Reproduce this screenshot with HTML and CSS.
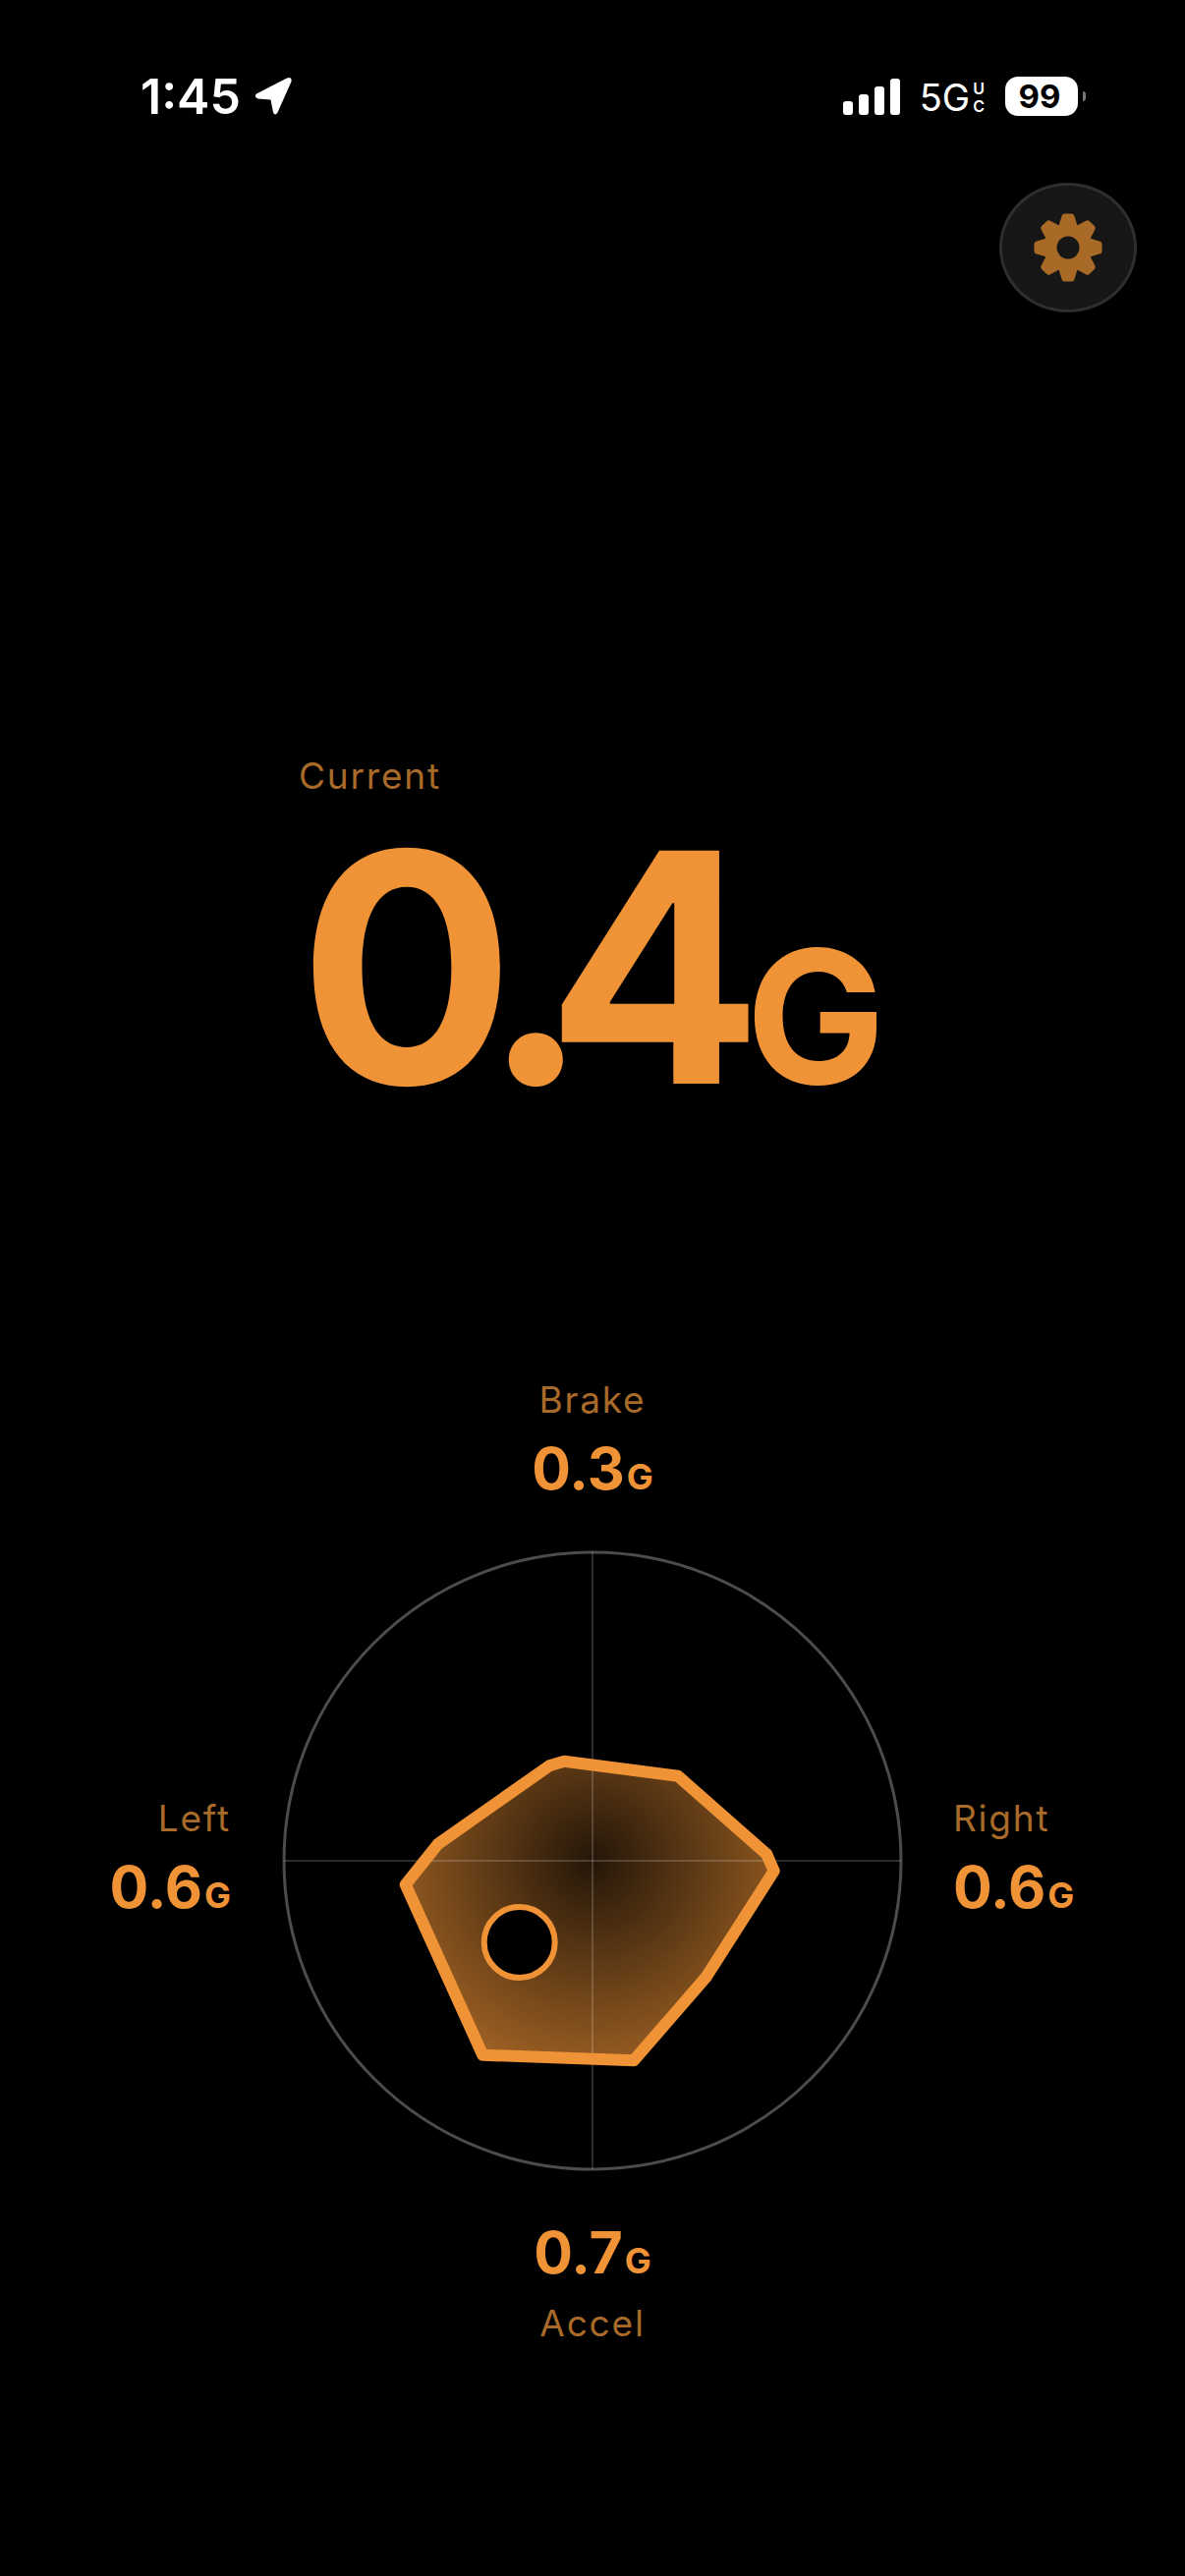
FILE: index.html
```html
<!DOCTYPE html>
<html>
<head>
    <meta charset="UTF-8">
    <title>G Meter</title>
    <link rel="stylesheet" href="styles.css">
</head>
<body>
    <!-- Status bar -->
    <div class="status-bar">
        <div class="status-left">
            <span class="time">1:45</span>
            <svg class="location" viewBox="0 0 40 40">
                <path d="M3 17.5 L34 1.5 Q39.5 -0.5 38.5 5 L24.5 36.5 Q22 40.5 20 36.5 L17.5 23.5 L4.5 22.5 Q0 20.5 3 17.5 Z" fill="#fff"/>
            </svg>
        </div>
        <div class="status-right">
            <div class="signal">
                <span class="bar bar-1"></span>
                <span class="bar bar-2"></span>
                <span class="bar bar-3"></span>
                <span class="bar bar-4"></span>
            </div>
            <div class="network">
                <span class="network-5g">5G</span>
                <span class="network-uc"><span>U</span><span>C</span></span>
            </div>
            <div class="battery">
                <div class="battery-body">99</div>
                <div class="battery-nib"></div>
            </div>
        </div>
    </div>

    <!-- Settings -->
    <div class="toolbar">
        <button class="settings" type="button" aria-label="Settings">
            <svg class="gear" viewBox="-36 -36 72 72">
                <defs>
                    <path id="tooth" d="M-9.5 -22 L-6.5 -32 Q-6 -34.5 -3.5 -34.5 H3.5 Q6 -34.5 6.5 -32 L9.5 -22 Z"/>
                </defs>
                <g fill="#a96a27">
                    <use href="#tooth"/>
                    <use href="#tooth" transform="rotate(45)"/>
                    <use href="#tooth" transform="rotate(90)"/>
                    <use href="#tooth" transform="rotate(135)"/>
                    <use href="#tooth" transform="rotate(180)"/>
                    <use href="#tooth" transform="rotate(225)"/>
                    <use href="#tooth" transform="rotate(270)"/>
                    <use href="#tooth" transform="rotate(315)"/>
                    <circle r="25"/>
                </g>
                <circle r="11.5" fill="#161616"/>
            </svg>
        </button>
    </div>

    <!-- Current reading -->
    <div class="current">
        <div class="label current-label">Current</div>
        <div class="current-value"><span class="current-number"><span class="digit-int">0</span><span class="digit-dot">.</span>4</span><span class="current-unit">G</span></div>
    </div>

    <!-- Peak readings and dial -->
    <div class="radar">
        <div class="reading reading-top">
            <div class="label">Brake</div>
            <div class="value">0.3<span class="unit">G</span></div>
        </div>
        <div class="reading reading-left">
            <div class="label">Left</div>
            <div class="value">0.6<span class="unit">G</span></div>
        </div>
        <svg class="dial" viewBox="-320 -320 640 640">
            <defs>
                <radialGradient id="trace" gradientUnits="userSpaceOnUse" cx="0" cy="0" r="315">
                    <stop offset="0" stop-color="#f09336" stop-opacity="0.15"/>
                    <stop offset="1" stop-color="#f09336" stop-opacity="0.87"/>
                </radialGradient>
            </defs>
            <circle class="dial-ring" r="314"/>
            <polygon points="-190.3,24.3 -157.3,-17 -44,-96.7 -28.7,-101.3 87,-86.3 177.3,-6.7 184.7,10.3 115.7,118.3 42,203.3 -111.7,197.7" fill="url(#trace)"/>
            <line class="dial-axis" x1="-314" y1="0" x2="314" y2="0"/>
            <line class="dial-axis" x1="0" y1="-314" x2="0" y2="314"/>
            <polygon class="dial-trace" points="-190.3,24.3 -157.3,-17 -44,-96.7 -28.7,-101.3 87,-86.3 177.3,-6.7 184.7,10.3 115.7,118.3 42,203.3 -111.7,197.7"/>
            <circle class="dial-puck" cx="-74.3" cy="83" r="36"/>
        </svg>
        <div class="reading reading-right">
            <div class="label">Right</div>
            <div class="value">0.6<span class="unit">G</span></div>
        </div>
        <div class="reading reading-bottom">
            <div class="value">0.7<span class="unit">G</span></div>
            <div class="label">Accel</div>
        </div>
    </div>
</body>
</html>
```

FILE: styles.css
```css
html {
    background-color: #000000;
}
body {
    background-color: #000000;
    color: #f09336;
    display: flex;
    flex-direction: column;
    font-family: "Inter", "Liberation Sans", sans-serif;
    margin: 0;
    min-height: 2622px;
    overflow: hidden;
    width: 1206px;
}

/* Status bar */
.status-bar {
    align-items: flex-start;
    box-sizing: border-box;
    color: #ffffff;
    display: flex;
    height: 120px;
    justify-content: space-between;
    padding: 68px 101px 0 143px;
}
.status-left {
    align-items: center;
    display: flex;
    gap: 13px;
}
.time {
    font-size: 50px;
    font-weight: 600;
    line-height: 60px;
}
.location {
    height: 40px;
    width: 40px;
}
.status-right {
    display: flex;
    padding-top: 11px;
}
.signal {
    align-items: flex-end;
    display: flex;
    gap: 6px;
    height: 38px;
}
.bar {
    background-color: #ffffff;
    border-radius: 3px;
    width: 10px;
}
.bar-1 { height: 14px; }
.bar-2 { height: 21px; }
.bar-3 { height: 29px; }
.bar-4 { height: 37px; }
.network {
    display: flex;
    margin-left: 20px;
}
.network-5g {
    font-size: 38px;
    font-weight: 400;
    line-height: 40px;
}
.network-uc {
    display: flex;
    flex-direction: column;
    font-size: 16px;
    font-weight: 600;
    gap: 2px;
    line-height: 16px;
    margin-left: 3px;
    padding-top: 3px;
    text-align: center;
}
.battery {
    align-items: center;
    display: flex;
    gap: 5px;
    margin-left: 21px;
    margin-top: -2px;
}
.battery-body {
    background-color: #ffffff;
    border-radius: 13px;
    color: #000000;
    font-size: 33px;
    font-weight: 700;
    height: 40px;
    line-height: 40px;
    padding-right: 4px;
    text-align: center;
    width: 70px;
}
.battery-nib {
    background-color: #777777;
    border-radius: 0 4px 4px 0;
    height: 10px;
    width: 3px;
}

/* Settings */
.toolbar {
    display: flex;
    justify-content: flex-end;
    margin-top: 66px;
    padding-right: 49px;
}
.settings {
    align-items: center;
    background-color: #161616;
    border: 3px solid #2e2e2e;
    border-radius: 50%;
    box-sizing: border-box;
    display: flex;
    height: 132px;
    justify-content: center;
    padding: 0;
    width: 140px;
}
.gear {
    height: 72px;
    width: 72px;
}

/* Current reading */
.label {
    color: #a86a28;
    font-size: 37px;
    font-weight: 400;
    letter-spacing: 1.8px;
    line-height: 44px;
}
.current {
    margin-top: 450px;
    padding-left: 304px;
}
.current-value {
    align-items: baseline;
    display: flex;
    line-height: 300px;
    margin-top: 23px;
}
.current-number {
    font-size: 326px;
    font-weight: 700;
}
.digit-int {
    letter-spacing: -33px;
}
.digit-dot {
    letter-spacing: -44px;
}
.current-unit {
    font-size: 189px;
    font-weight: 700;
    margin-left: -17px;
}

/* Peak readings and dial */
.radar {
    display: grid;
    grid-template-columns: 1fr 640px 1fr;
    margin-top: 218px;
}
.reading-top {
    grid-column: 2;
    grid-row: 1;
    padding-bottom: 33px;
    text-align: center;
}
.reading-bottom {
    grid-column: 2;
    grid-row: 3;
    padding-top: 41px;
    text-align: center;
}
.reading-bottom .label {
    margin-top: 4px;
}
.reading-left {
    align-self: center;
    grid-column: 1;
    grid-row: 2;
    padding-right: 48px;
    padding-top: 8px;
    text-align: right;
}
.reading-right {
    align-self: center;
    grid-column: 3;
    grid-row: 2;
    padding-left: 47px;
    padding-top: 8px;
}
.value {
    font-size: 59px;
    font-weight: 700;
    line-height: 76px;
    margin-top: 10px;
}
.reading-bottom .value {
    margin-top: 0;
}
.unit {
    font-size: 36px;
    margin-left: 2px;
}
.dial {
    display: block;
    grid-column: 2;
    grid-row: 2;
    height: 640px;
    width: 640px;
}
.dial-ring {
    fill: none;
    stroke: #4c4c4c;
    stroke-width: 3;
}
.dial-axis {
    stroke: rgba(255, 255, 255, 0.17);
    stroke-width: 2;
}
.dial-trace {
    fill: none;
    stroke: #f09336;
    stroke-linejoin: round;
    stroke-width: 12;
}
.dial-puck {
    fill: #000000;
    stroke: #f09336;
    stroke-width: 6;
}
```
